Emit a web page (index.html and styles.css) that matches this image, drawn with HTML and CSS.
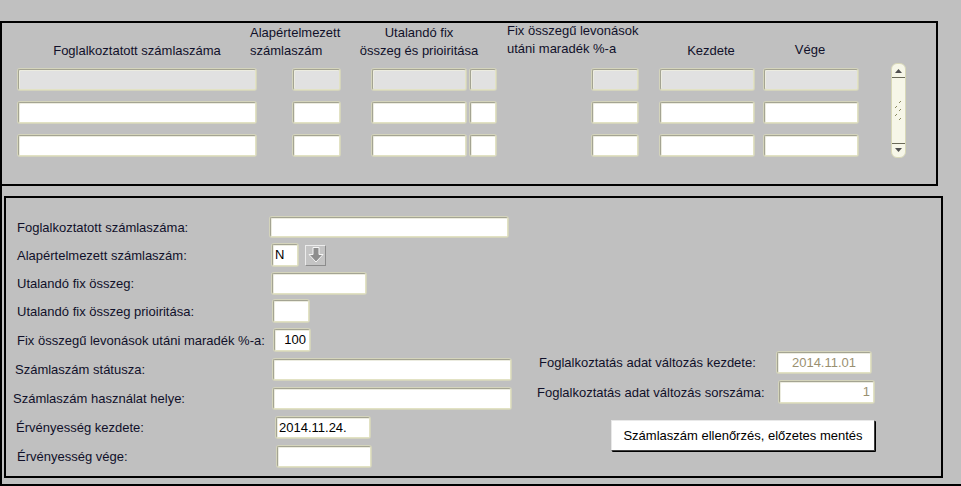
FILE: index.html
```html
<!DOCTYPE html>
<html lang="hu">
<head>
<meta charset="utf-8">
<title>Számlaszám</title>
<link rel="stylesheet" href="styles.css">
</head>
<body>
<div class="frame">
  <section class="top-panel">
    <div class="heads">
      <div class="h h-a">Foglalkoztatott számlaszáma</div>
      <div class="h h-b">Alapértelmezett<br>számlaszám</div>
      <div class="h h-c">Utalandó fix<br>összeg és prioiritása</div>
      <div class="h h-d">Fix összegű levonások<br>utáni maradék %-a</div>
      <div class="h h-e">Kezdete</div>
      <div class="h h-f">Vége</div>
    </div>
    <div class="body">
      <div class="grid">
        <div class="fld dis c1"></div><div class="fld dis c2"></div><div class="fld dis c3"></div><div class="fld dis c4"></div><div class="fld dis c5"></div><div class="fld dis c6"></div><div class="fld dis c7"></div>
        <div class="fld c1"></div><div class="fld c2"></div><div class="fld c3"></div><div class="fld c4"></div><div class="fld c5"></div><div class="fld c6"></div><div class="fld c7"></div>
        <div class="fld c1"></div><div class="fld c2"></div><div class="fld c3"></div><div class="fld c4"></div><div class="fld c5"></div><div class="fld c6"></div><div class="fld c7"></div>
      </div>
      <div class="scroll">
        <svg class="arr-up" width="15" height="14" viewBox="0 0 15 14"><path d="M4 9 L7.5 5 L11 9 Z" fill="#505050"/><path d="M1 13.5 H14" stroke="#6a6a58" stroke-width="1"/></svg>
        <svg class="grip" width="15" height="20" viewBox="0 0 15 20"><g fill="#8a8a60"><rect x="9" y="0" width="1" height="1"/><rect x="8" y="1" width="1" height="1"/><rect x="5" y="5" width="1" height="1"/><rect x="4" y="6" width="1" height="1"/><rect x="9" y="8" width="1" height="1"/><rect x="8" y="9" width="1" height="1"/><rect x="5" y="13" width="1" height="1"/><rect x="4" y="14" width="1" height="1"/><rect x="9" y="17" width="1" height="1"/><rect x="8" y="18" width="1" height="1"/></g></svg>
        <svg class="arr-dn" width="15" height="14" viewBox="0 0 15 14"><path d="M1 0.5 H14" stroke="#6a6a58" stroke-width="1"/><path d="M4 5 L7.5 9 L11 5 Z" fill="#505050"/></svg>
      </div>
    </div>
  </section>
  <section class="bottom-panel">
    <div class="left">
      <div class="row"><span class="lbl">Foglalkoztatott számlaszáma:</span><span class="fld w238"></span></div>
      <div class="row"><span class="lbl">Alapértelmezett számlaszám:</span><span class="fld w26 val">N</span>
        <span class="dd"><svg width="18" height="18" viewBox="0 0 18 18"><path d="M6 1.5 H12 V8.5 H16 L9 16 L2 8.5 H6 Z" fill="#8e8e8e" stroke="#f6f6f6" stroke-width="1"/></svg></span></div>
      <div class="row"><span class="lbl">Utalandó fix összeg:</span><span class="fld w94"></span></div>
      <div class="row tall"><span class="lbl">Utalandó fix összeg prioiritása:</span><span class="fld w36 nudge1"></span></div>
      <div class="row tall"><span class="lbl">Fix összegű levonások utáni maradék %-a:</span><span class="fld w36 nudge2 val num">100</span></div>
      <div class="row tall"><span class="lbl in2">Számlaszám státusza:</span><span class="fld w238 nudge1"></span></div>
      <div class="row tall"><span class="lbl in4">Számlaszám használat helye:</span><span class="fld w238 nudge1"></span></div>
      <div class="row tall"><span class="lbl in1">Érvényesség kezdete:</span><span class="fld w94 nudge3 val">2014.11.24.</span></div>
      <div class="row"><span class="lbl">Érvényesség vége:</span><span class="fld w94 nudge4"></span></div>
    </div>
    <div class="right">
      <div class="rrow"><span class="rlbl">Foglalkoztatás adat változás kezdete:</span><span class="fld w94 ro center">2014.11.01</span></div>
      <div class="rrow r2"><span class="rlbl">Foglalkoztatás adat változás sorszáma:</span><span class="fld w95 ro num">1</span></div>
      <button class="btn" type="button">Számlaszám ellenőrzés, előzetes mentés</button>
    </div>
  </section>
</div>
</body>
</html>
```
FILE: styles.css
```css
* { box-sizing: border-box; }
html, body { margin: 0; padding: 0; }
body {
  width: 961px; height: 486px;
  background: #c0c0c0;
  font-family: "Liberation Sans", Arial, sans-serif;
  font-size: 13px;
  color: #10102a;
  overflow: hidden;
  padding-top: 21px;
}
.frame {
  width: 961px;
  height: 465px;
  border-left: 2px solid #000;
  border-bottom: 2px solid #000;
}
.top-panel {
  width: 936px;
  height: 165px;
  border-top: 2px solid #000;
  border-right: 2px solid #000;
  border-bottom: 2px solid #000;
  padding: 1px 0 0 16px;
}
.heads { display: flex; height: 36px; line-height: 18px; }
.h { white-space: nowrap; }
.h-a { width: 238px; text-align: center; align-self: flex-end; }
.h-b { margin-left: -6px; width: 95px; }
.h-c { margin-left: 9px; width: 130px; text-align: center; }
.h-d { margin-left: 23px; width: 153px; margin-top: -2px; }
.h-e { width: 102px; text-align: center; align-self: flex-end; margin-top: 1px; }
.h-f { width: 96px; text-align: center; align-self: flex-end; margin-bottom: 1px; }

.body { display: flex; align-items: flex-start; }
.grid {
  margin-top: 9px;
  display: grid;
  grid-template-columns: 238px 37px 47px 32px 94px 4px 26px 96px 46px 22px 94px 10px 94px;
  grid-auto-rows: 21px;
  row-gap: 12px;
}
.c1 { grid-column: 1; }
.c2 { grid-column: 3; }
.c3 { grid-column: 5; }
.c4 { grid-column: 7; }
.c5 { grid-column: 9; }
.c6 { grid-column: 11; }
.c7 { grid-column: 13; }

.fld {
  display: block;
  height: 21px;
  background: #fff;
  border: 1px solid;
  border-color: #a4a492 #e2e2c4 #e2e2c4 #a4a492;
  border-radius: 2px;
  box-shadow: inset 1px 1px 0 #ecece0, 0 0 0 1px #d4d4bc;
}
.fld.dis { background: #e1e1e1; }

.scroll {
  margin-left: 33px;
  margin-top: 3px;
  width: 15px;
  height: 95px;
  background: #f6f6e8;
  border: 1px solid #d8d8b8;
  border-radius: 6px;
  display: flex;
  flex-direction: column;
  justify-content: space-between;
  align-items: center;
  overflow: hidden;
}
.scroll svg { display: block; margin-left: -1px; }

.bottom-panel {
  margin-top: 10px;
  margin-left: 2px;
  width: 939px;
  height: 282px;
  border: 2px solid #000;
  display: flex;
  align-items: flex-start;
}
.left { padding: 18px 0 0 11px; width: 505px; }
.row { display: flex; align-items: center; height: 22px; margin-bottom: 6px; }
.row.tall { margin-bottom: 7px; }
.lbl { width: 255px; white-space: nowrap; }
.lbl.in1 { margin-left: -1px; width: 256px; }
.lbl.in2 { margin-left: -2px; width: 257px; }
.lbl.in4 { margin-left: -4px; width: 259px; }
.w238 { width: 238px; }
.w26 { width: 26px; height: 22px; }
.w94 { width: 94px; }
.w95 { width: 95px; }
.w36 { width: 36px; height: 22px; }
.nudge1 { margin-left: 1px; }
.nudge2 { margin-left: 2px; }
.nudge3 { margin-left: 4px; }
.nudge4 { margin-left: 5px; }
.row:first-child .fld { margin-left: -2px; height: 20px; }
.val { color: #000; line-height: 19px; padding-left: 2px; }
.num { text-align: right; padding-right: 3px; }
.dd {
  margin-left: 7px;
  width: 21px; height: 21px;
  background: #c4c4c4;
  border: 1px solid;
  border-color: #ececec #8c8c8c #8c8c8c #ececec;
  display: flex; align-items: center; justify-content: center;
}
.dd svg { display: block; }

.right { margin-left: 28px; padding-top: 154px; width: 340px; }
.rrow { display: flex; align-items: center; height: 21px; }
.rrow.r2 { margin-top: 8px; margin-left: -2px; height: 22px; }
.rlbl { width: 238px; white-space: nowrap; }
.rrow.r2 .rlbl { width: 242px; }
.ro { color: #9a9070; line-height: 19px; }
.ro.center { text-align: center; }
.rrow.r2 .fld { height: 22px; line-height: 20px; }
.btn {
  display: block;
  margin: 17px 0 0 72px;
  width: 264px; height: 31px;
  background: #fff;
  border: 1px solid;
  border-color: #e8e8e8 #404040 #404040 #e8e8e8;
  box-shadow: 1px 1px 0 #000;
  font-family: "Liberation Sans", Arial, sans-serif;
  font-size: 13px;
  font-weight: normal;
  color: #000;
  padding: 0;
  border-radius: 1px;
}
```
